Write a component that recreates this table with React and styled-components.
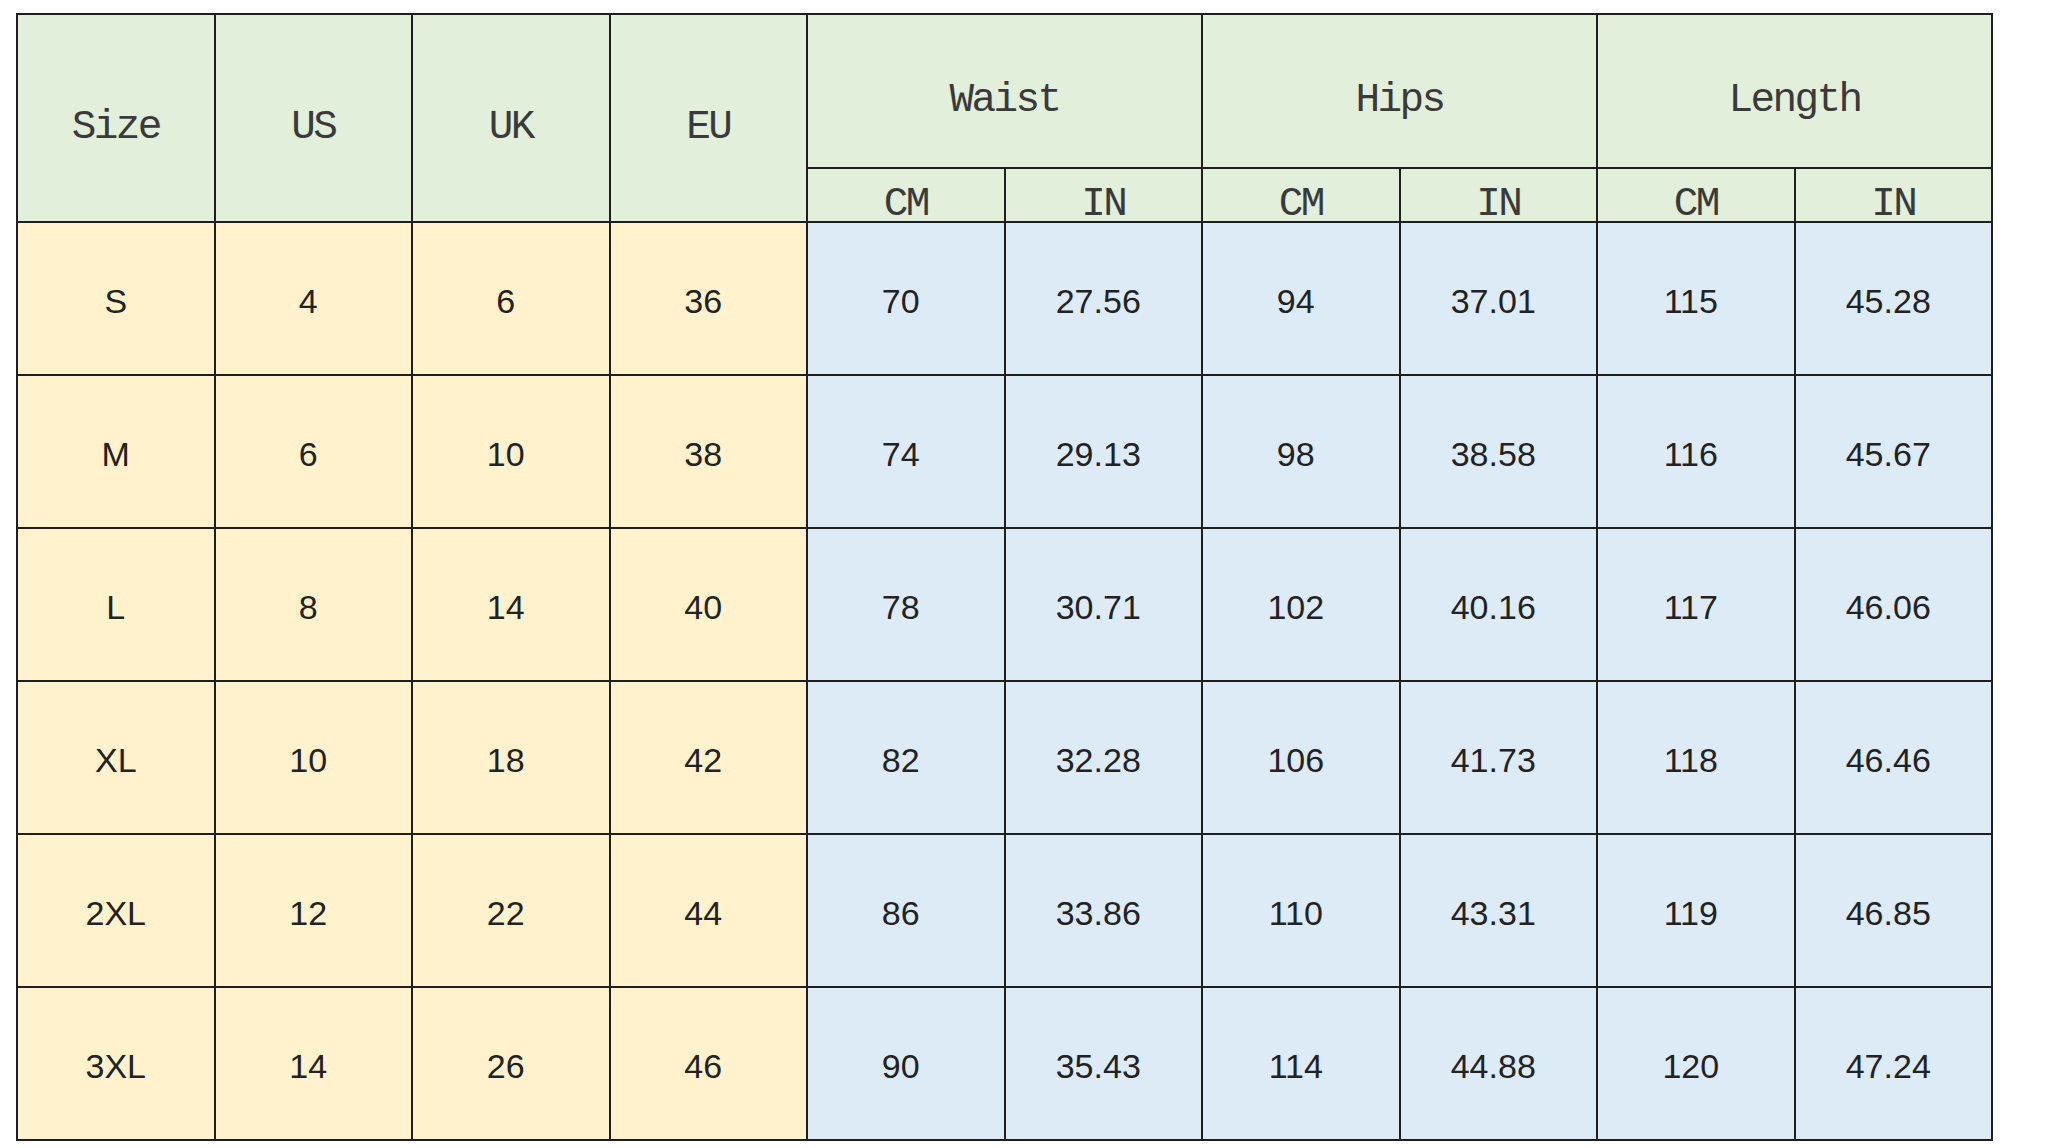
import React from "react";
import styled, { createGlobalStyle } from "styled-components";

const GlobalStyle = createGlobalStyle`
    html, body {
        margin: 0;
        padding: 0;
        background: #ffffff;
    }
    body {
        padding: 13px 0 0 16px;
        font-family: "Liberation Sans", Arial, sans-serif;
    }
`

const tones = {
    head: "#e2efda",
    size: "#fff2cc",
    measure: "#ddebf7",
}

const groups = ["Waist", "Hips", "Length"]

const rows = [
    ["S", "4", "6", "36", "70", "27.56", "94", "37.01", "115", "45.28"],
    ["M", "6", "10", "38", "74", "29.13", "98", "38.58", "116", "45.67"],
    ["L", "8", "14", "40", "78", "30.71", "102", "40.16", "117", "46.06"],
    ["XL", "10", "18", "42", "82", "32.28", "106", "41.73", "118", "46.46"],
    ["2XL", "12", "22", "44", "86", "33.86", "110", "43.31", "119", "46.85"],
    ["3XL", "14", "26", "46", "90", "35.43", "114", "44.88", "120", "47.24"],
]

const App = () => {
    return (
        <>
            <GlobalStyle />
            <Chart>
                {/* 상단 헤더 */}
                {["Size", "US", "UK", "EU"].map((label) => (
                    <HeadCell key={label} $rows={2}>{label}</HeadCell>
                ))}
                {groups.map((label) => (
                    <HeadCell key={label} $cols={2}>{label}</HeadCell>
                ))}
                {groups.map((label) => (
                    <React.Fragment key={label + "-unit"}>
                        <HeadCell>CM</HeadCell>
                        <HeadCell>IN</HeadCell>
                    </React.Fragment>
                ))}

                {/* 사이즈 데이터 */}
                {rows.map((row) =>
                    row.map((value, i) => (
                        <Cell
                            key={row[0] + i}
                            $tone={i < 4 ? "size" : "measure"}
                            $numeric={i > 0}
                        >
                            {value}
                        </Cell>
                    ))
                )}
            </Chart>
        </>
    )
}

export default App;

const Chart = styled.div`
    display: grid;
    grid-template-columns: repeat(10, 1fr);
    grid-template-rows: 152px 52px repeat(6, 151px);
    gap: 2px;
    width: 1973px;
    padding: 2px;
    background-color: #1e1e1e;
`

const HeadCell = styled.div`
    grid-row: span ${(p) => p.$rows || 1};
    grid-column: span ${(p) => p.$cols || 1};
    display: flex;
    align-items: center;
    justify-content: center;
    padding-top: 17px;
    box-sizing: border-box;
    background-color: ${tones.head};
    color: #3a3a3a;
    font-family: "Liberation Mono", "Courier New", monospace;
    font-size: 41px;
    letter-spacing: -2.6px;
`

const Cell = styled.div`
    display: flex;
    align-items: center;
    justify-content: center;
    padding-top: 5px;
    padding-right: ${(p) => (p.$numeric ? "10px" : "0")};
    box-sizing: border-box;
    background-color: ${(p) => tones[p.$tone]};
    color: #222222;
    font-family: "Liberation Sans", Arial, sans-serif;
    font-size: 34px;
`
